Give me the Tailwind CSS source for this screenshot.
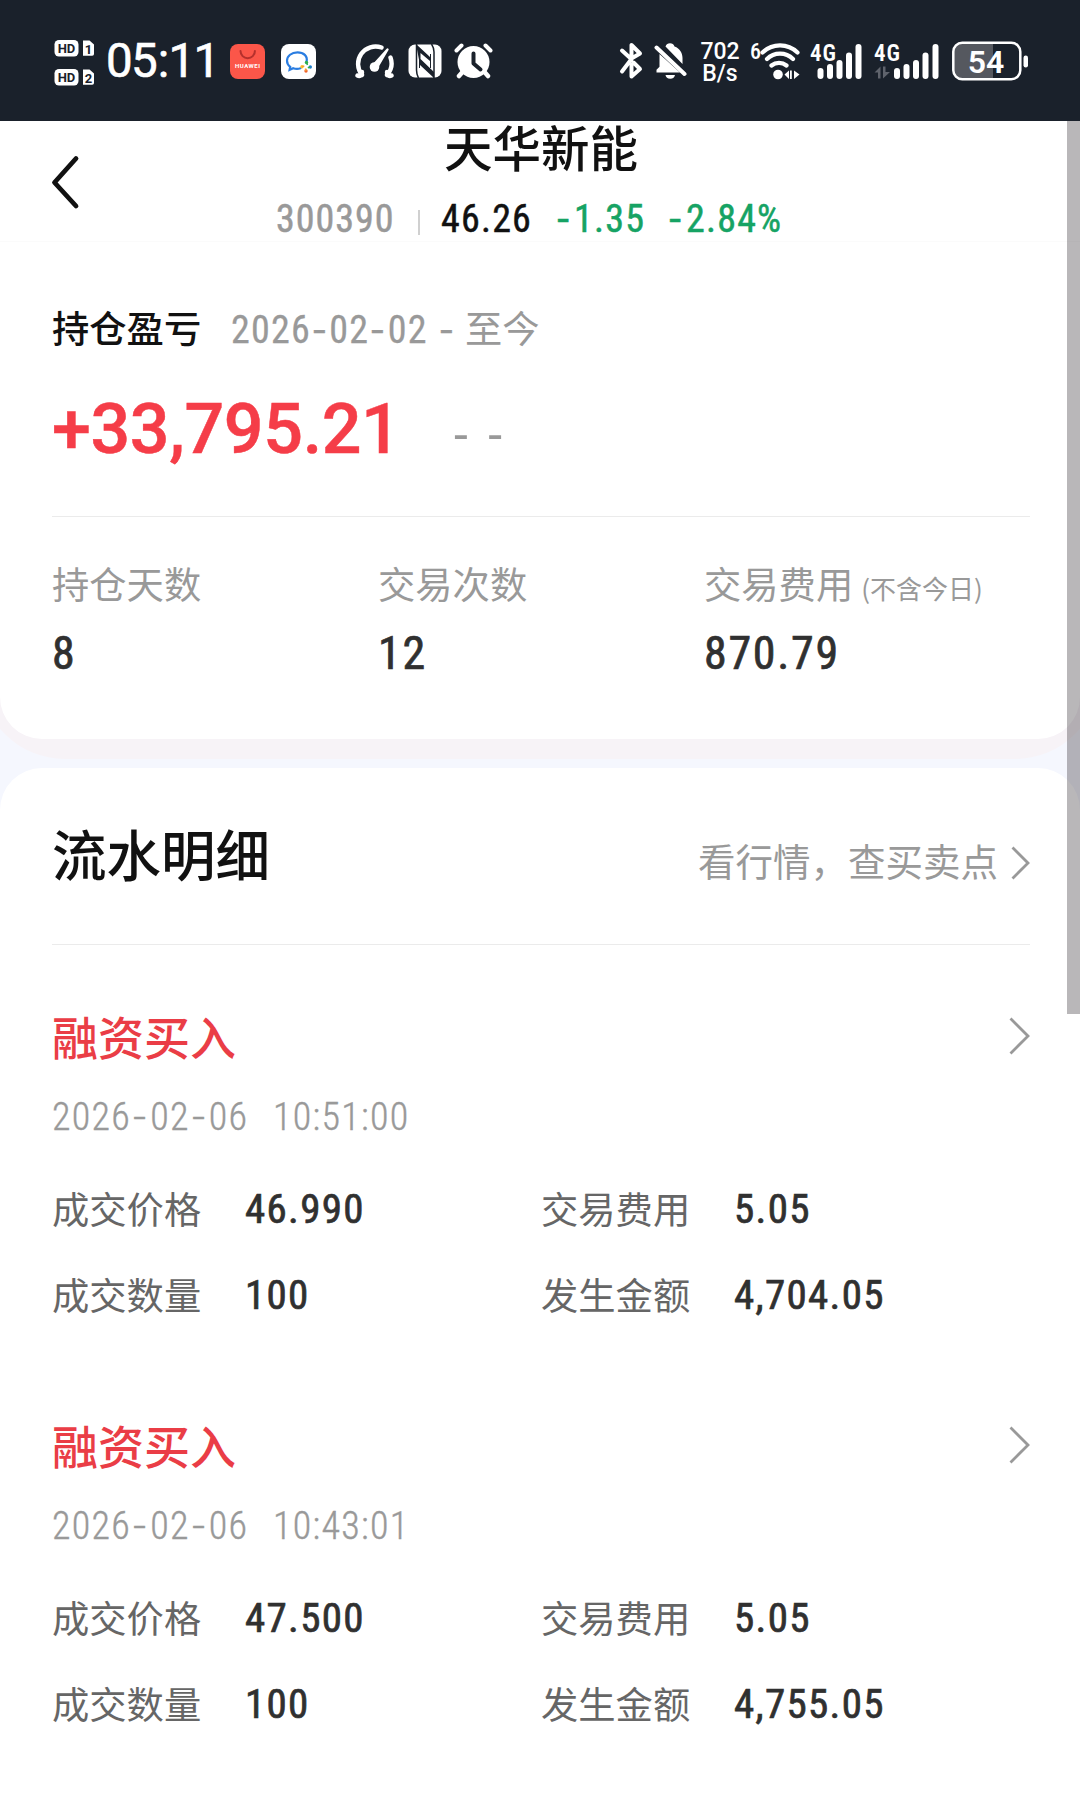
<!DOCTYPE html>
<html lang="zh-CN">
    <head>
        <meta charset="UTF-8">
        <title>天华新能</title>
        <script src="https://cdn.jsdelivr.net/npm/@tailwindcss/browser@4"></script>
    </head>
    <body
        class="relative w-[1080px] h-[1803px] overflow-hidden bg-[#f5f7fe] text-[#111] font-['Noto_Sans_CJK_SC',sans-serif]">

        <!-- Status bar -->
        <div class="flex items-center h-[121px] bg-[#1a212b] text-white font-['Roboto',sans-serif]">
            <svg class="ml-[54px] mt-[4px] w-[41px] h-[48px]" viewBox="0 0 41 48" font-family="Roboto" font-weight="700">
                <rect x="0.5" y="1" width="24" height="16.500" rx="4.500" fill="#fff" />
                <path d="M29 1.500h6.500l4.500 4v9.500a1.800 1.800 0 0 1-1.800 1.800H29z" fill="#fff" />
                <rect x="0.5" y="30" width="24" height="16.500" rx="4.500" fill="#fff" />
                <path d="M29 30.500h6.500l4.500 4v9.500a1.800 1.800 0 0 1-1.800 1.800H29z" fill="#fff" />
                <g fill="#1a212b" font-size="13" text-anchor="middle">
                    <text x="12.500" y="14">HD</text>
                    <text x="34.500" y="14.500">1</text>
                    <text x="12.500" y="43">HD</text>
                    <text x="34.500" y="43.500">2</text>
                </g>
            </svg>
            <span class="ml-[11px] mt-[2px] w-[114px] text-[47.500px] leading-none tracking-[-1.800px] whitespace-nowrap [-webkit-text-stroke:0.6px_white]">05<span class="pl-[2px] pr-px">:</span>11</span>

            <!-- Notification icons -->
            <svg class="ml-[10px] mt-[2px] w-[35px] h-[35px]" viewBox="0 0 35 35">
                <rect width="35" height="35" rx="8" fill="#fb5649" />
                <path d="M10.500 7a7.200 7.200 0 0 0 14.400 0" fill="none" stroke="#b5302c" stroke-width="2" stroke-linecap="round" />
                <text x="17.500" y="24" fill="#fff" font-family="Roboto" font-weight="700" font-size="6" text-anchor="middle" textLength="25">HUAWEI</text>
            </svg>
            <svg class="ml-[16px] mt-[2px] w-[35px] h-[35px]" viewBox="0 0 35 35" fill="none">
                <rect width="35" height="35" rx="8" fill="#fff" />
                <path d="M25.500 17.500C27 12 22.500 8.300 16.500 8.300S6 12 6 16.800c0 2.600 1.300 4.600 3.200 6l-.6 3 3.600-1.600c2.300.8 4.800.9 7.300.1" stroke="#2a7de1" stroke-width="2.200" stroke-linecap="round" />
                <circle cx="25.500" cy="18.500" r="1.700" fill="#2fae4e" />
                <circle cx="29.300" cy="23" r="1.700" fill="#1d78d6" />
                <circle cx="25" cy="27" r="1.700" fill="#f0622d" />
                <circle cx="21" cy="22.700" r="1.700" fill="#fbc02d" />
                <path d="M25.500 18.500l1 2.500M29.300 23l-2.500.8" stroke="#2fae4e" stroke-width="1.500" />
                <path d="M25 27l-.5-2.500M21 22.700l2.300-.7" stroke="#f7a02d" stroke-width="1.500" />
            </svg>
            <svg class="ml-[38px] w-[41px] h-[36px]" viewBox="0 0 41 36" fill="none" stroke="#fff" stroke-linecap="round" stroke-linejoin="round">
                <path d="M27.500 4.500A17.500 17.500 0 0 0 8 32M3.500 32.500c2 1 4.500.5 4.500-3.500M36.500 14.500A17.500 17.500 0 0 1 33 32M37.500 32.500c-2 1-4.500.5-4.500-3.500" stroke-width="4.400" />
                <circle cx="20.500" cy="24" r="4.800" fill="#fff" stroke="none" />
                <path d="M33.500 6.500l-14 15.500 3.500 2.500z" fill="#fff" stroke-width="2.400" />
            </svg>
            <!-- NFC -->
            <svg class="ml-[13px] w-[34px] h-[34px]" viewBox="0 0 34 34">
                <rect x="0.5" y="0.5" width="33" height="33" rx="6.500" fill="#fff" />
                <path d="M8.500 0V26c0 3 .5 5 2 8" stroke="#1a212b" stroke-width="1.500" fill="none" />
                <path d="M23.500 0c2 3 2.500 5 2.500 8V34" stroke="#1a212b" stroke-width="1.500" fill="none" />
                <path d="M8 0L22 13v4L12.500 9v6L26 28v6L12 21z" fill="#1a212b" />
                <path d="M11.500 9v15M22.500 10v14" stroke="#1a212b" stroke-width="1" />
            </svg>
            <svg class="ml-[12px] w-[39px] h-[36px]" viewBox="0 0 39 36" fill="none" stroke="#fff" stroke-linecap="round">
                <circle cx="19.500" cy="19" r="16" fill="#fff" stroke="none" />
                <path d="M2.500 7.500l5-5M36.500 7.500l-5-5" stroke-width="4" />
                <path d="M8.500 29l-3.500 4M30.500 29l3.500 4" stroke-width="4.500" />
                <path d="M19.500 10.500v10l7 6" stroke="#1a212b" stroke-width="4" stroke-linejoin="round" />
            </svg>

            <!-- System icons -->
            <svg class="ml-[126px] w-[25px] h-[38px]" viewBox="0 0 25 38" fill="none" stroke="#fff" stroke-width="4" stroke-linecap="round" stroke-linejoin="round">
                <path d="M3 8.500l9 8.300L21 11.500l-8.500-8.500V17L3 29.500M12.500 23V34.500L21 27l-6.500-6.500" />
            </svg>
            <svg class="ml-[10px] w-[33px] h-[36px]" viewBox="0 0 33 36" fill="#fff">
                <path d="M11.500 3.500a4.800 4.800 0 0 1 9 0c5.500 2 8 6.500 8 11.500v6z" />
                <path d="M5.500 11L26 29.500H2.500v-2.800l3-3z" />
                <path d="M11.500 32h9.500a4.800 4.300 0 0 1-9.500 0z" />
                <path d="M4.500 1.500l28 26.500" stroke="#1a212b" stroke-width="2.500" />
                <path d="M2.500 4.500l28 26.500" stroke="#fff" stroke-width="4" stroke-linecap="round" />
            </svg>
            <div class="ml-[12px] mt-[2px] w-[42px] text-center text-[23px] leading-none font-medium">
                <div class="h-[22px]">702</div>
                <div class="h-[22px]">B/s</div>
            </div>
            <svg class="ml-[9px] w-[51px] h-[40px] overflow-visible" viewBox="0 0 51 40" fill="none" stroke="#fff" stroke-linecap="round">
                <text x="0" y="17.500" fill="#fff" stroke="none" font-family="Roboto Condensed" font-weight="500" font-size="22">6</text>
                <path d="M12.500 11.500a25 25 0 0 1 35 0M17 18a18.500 18.500 0 0 1 26 0M21.500 24.500a12 12 0 0 1 15 0" stroke-width="4.200" />
                <circle cx="28" cy="33.500" r="4.800" fill="#fff" stroke="none" />
                <path d="M34.500 33.500l4.500-4v8.500zM49.500 33.500l-5.500-4v8.500zM40 29.500h1.800v8.500H40z" fill="#fff" stroke="none" />
            </svg>
            <svg class="ml-[9px] w-[53px] h-[38px] overflow-visible" viewBox="0 0 53 38" fill="#fff">
                <text x="0" y="18.500" font-family="Roboto Condensed" font-weight="600" font-size="23" textLength="26">4G</text>
                <rect x="7.500" y="26" width="6" height="11" rx="3" />
                <rect x="17" y="22" width="6" height="15" rx="3" />
                <rect x="26.500" y="18" width="6" height="19" rx="3" />
                <rect x="36" y="10.500" width="6" height="26.500" rx="3" />
                <rect x="45.500" y="2" width="6" height="35" rx="3" />
            </svg>
            <svg class="ml-[11px] w-[66px] h-[38px] overflow-visible" viewBox="0 0 66 38" fill="#fff">
                <text x="0" y="18.500" font-family="Roboto Condensed" font-weight="600" font-size="23" textLength="26">4G</text>
                <path d="M6.500 24.500v12H4v-6H0.500zM9 24.500h2.500v5.500H16l-7 6.500z" fill="#5f636c" />
                <rect x="20" y="26" width="6" height="11" rx="3" />
                <rect x="29.500" y="22" width="6" height="15" rx="3" />
                <rect x="39" y="18" width="6" height="19" rx="3" />
                <rect x="48.500" y="10.500" width="6" height="26.500" rx="3" />
                <rect x="58.500" y="2" width="6" height="35" rx="3" />
            </svg>
            <svg class="ml-[12px] w-[78px] h-[40px]" viewBox="0 0 78 40">
                <path d="M10 2h31v36H10a8 8 0 0 1-8-8V10a8 8 0 0 1 8-8z" fill="#55585f" />
                <rect x="1.300" y="1.700" width="67" height="36.500" rx="9" fill="none" stroke="#fff" stroke-width="2.500" />
                <rect x="71.500" y="14.500" width="4.500" height="12" rx="2.200" fill="#fff" />
                <text x="34" y="31.500" fill="#fff" font-family="Roboto" font-weight="600" font-size="32" text-anchor="middle">54</text>
            </svg>
        </div>

        <!-- Pale rose layer behind the summary card -->
        <div class="h-[638px] -mx-[20px] px-[20px] rounded-b-[85px] bg-[#f7f3f7]">
            <div class="h-[618px] rounded-b-[42px] bg-white">
                <header class="flex h-[121px] border-b border-[#fbfbfb]">
                    <svg class="ml-[50px] mt-[33px] w-[30px] h-[56px]" viewBox="0 0 30 56" fill="none"
                        stroke="#111" stroke-width="4.800" stroke-linecap="round" stroke-linejoin="round">
                        <path d="M26 4.500L4.500 28.500L26 52" />
                    </svg>
                    <div class="ml-[196px]">
                        <h1 class="-mt-px ml-[168px] h-[75px] text-[48.500px] leading-[52px] font-medium">天华新能</h1>
                        <div class="flex items-center h-[48px] text-[38px] leading-[48px] font-['Roboto_Condensed',sans-serif] tracking-[1.200px] [-webkit-text-stroke:0.5px]">
                            <span class="w-[142px] tracking-[1px] text-[#999]">300390</span>
                            <span class="w-[2px] h-[25px] mt-[6px] bg-[#d0d0d0]"></span>
                            <span class="ml-[21px] w-[116px]">46.26</span>
                            <span class="w-[112px] text-[#16a364]"><span class="inline-block origin-left scale-x-130 w-[17px]">-</span>1.35</span>
                            <span class="text-[#16a364]"><span class="inline-block origin-left scale-x-130 w-[17px]">-</span>2.84%</span>
                        </div>
                    </div>
                </header>

                <section class="ml-[52px] mr-[50px]">
                    <div class="flex items-center mt-[63px] h-[50px] text-[37.300px] leading-[46px] text-[#999]">
                        <h2 class="w-[179px] pb-[6px] text-[#111] font-medium">持仓盈亏</h2>
                        <span class="text-[38px] w-[234px] font-['Roboto_Condensed',sans-serif] tracking-[1.200px] [-webkit-text-stroke:0.3px] whitespace-nowrap">2026<span class="inline-block scale-x-140 w-[18.500px] text-center">-</span>02<span class="inline-block scale-x-140 w-[18.500px] text-center">-</span>02<span class="inline-block scale-x-140 ml-[14px]">-</span></span>
                        <span class="pb-[6px]">至今</span>
                    </div>
                    <div class="flex items-center mt-[34px] h-[80px] font-['Roboto',sans-serif]">
                        <span class="w-[402px] text-[70px] leading-[80px] font-medium tracking-[-0.400px] text-[#f53d48] [-webkit-text-stroke:0.5px]">+33,795.21</span>
                        <span class="mt-[12px] text-[50px] text-[#999] leading-[60px] tracking-[4px]">- -</span>
                    </div>
                    <div class="mt-[47px] h-px bg-[#ebebeb]"></div>
                    <div class="grid grid-cols-[326px_326px_1fr] mt-[42px] text-[37.300px] leading-[48px] text-[#999]">
                        <div>
                            <p class="h-[48px]">持仓天数</p>
                            <p class="mt-[22px] text-[46px] font-['Roboto_Condensed',sans-serif] tracking-[1.700px] text-[#303030] [-webkit-text-stroke:0.7px]">8</p>
                        </div>
                        <div>
                            <p class="h-[48px]">交易次数</p>
                            <p class="mt-[22px] text-[46px] font-['Roboto_Condensed',sans-serif] tracking-[1.700px] text-[#303030] [-webkit-text-stroke:0.7px]">12</p>
                        </div>
                        <div>
                            <p class="h-[48px]">交易费用<span class="ml-[8px] text-[26px] leading-none whitespace-nowrap">(不含今日)</span></p>
                            <p class="mt-[22px] text-[46px] font-['Roboto_Condensed',sans-serif] tracking-[1.700px] text-[#303030] [-webkit-text-stroke:0.7px]">870.79</p>
                        </div>
                    </div>
                </section>
            </div>
        </div>

        <!-- Transaction list -->
        <main class="mt-[9px] h-[1100px] pl-[52px] pr-[50px] rounded-t-[42px] bg-white">
            <div class="flex items-center justify-between h-[177px] border-b border-[#ebebeb]">
                <h2 class="pb-[7px] text-[54.500px] leading-[60px] font-medium">流水明细</h2>
                <div class="flex items-center gap-[13px] mt-[8px] text-[37.500px] leading-[48px] text-[#999]">
                    <span>看行情，查买卖点</span>
                    <svg class="w-[19px] h-[36px] mt-[6px]" viewBox="0 0 19 36" fill="none" stroke="#999" stroke-width="2.800">
                        <path d="M1.500 2.500L17 18L1.500 33.500" />
                    </svg>
                </div>
            </div>
            <div id="records"></div>
        </main>

        <!-- Scrollbar -->
        <div class="absolute top-[121px] right-0 w-[13px] h-[893px] bg-[#161218]/30"></div>

        <script>
    const records = [
      { type: "融资买入", date: "2026-02-06", time: "10:51:00", price: "46.990", fee: "5.05", count: "100", amount: "4,704.05" },
      { type: "融资买入", date: "2026-02-06", time: "10:43:01", price: "47.500", fee: "5.05", count: "100", amount: "4,755.05" },
    ];

    // The date font has a short hyphen, so it is widened
    const hyphen = '<span class="inline-block scale-x-140 w-[19px] text-center">-</span>';

    function cell(label, value) {
      return `
        <div class="flex items-center h-[86px]">
          <span class="w-[193px] pb-[3px] text-[37.300px] text-[#666]">${label}</span>
          <span class="text-[41px] font-['Roboto_Condensed',sans-serif] tracking-[1.300px] text-[#303030] [-webkit-text-stroke:0.7px]">${value}</span>
        </div>`;
    }

    document.getElementById("records").innerHTML = records.map(r => `
      <article class="h-[409px] pt-[62px] leading-[60px]">
        <div class="flex items-center justify-between h-[60px]">
          <h3 class="pb-[4px] text-[46px] font-medium text-[#ea3d46]">${r.type}</h3>
          <svg class="w-[21px] h-[40px] mb-[2px]" viewBox="0 0 21 40" fill="none" stroke="#999" stroke-width="2.800">
            <path d="M1.500 2.500L19 20L1.500 37.500" />
          </svg>
        </div>
        <div class="flex items-center mt-[20px] h-[60px] text-[38px] font-['Roboto_Condensed',sans-serif] font-light tracking-[1.300px] text-[#999] [-webkit-text-stroke:0.4px]">
          <span class="w-[221px]">${r.date.replaceAll("-", hyphen)}</span>
          <span>${r.time}</span>
        </div>
        <div class="grid grid-cols-[489px_1fr] mt-[19px]">
          ${cell("成交价格", r.price)}
          ${cell("交易费用", r.fee)}
          ${cell("成交数量", r.count)}
          ${cell("发生金额", r.amount)}
        </div>
      </article>`).join("");
  </script>
    </body>
</html>
